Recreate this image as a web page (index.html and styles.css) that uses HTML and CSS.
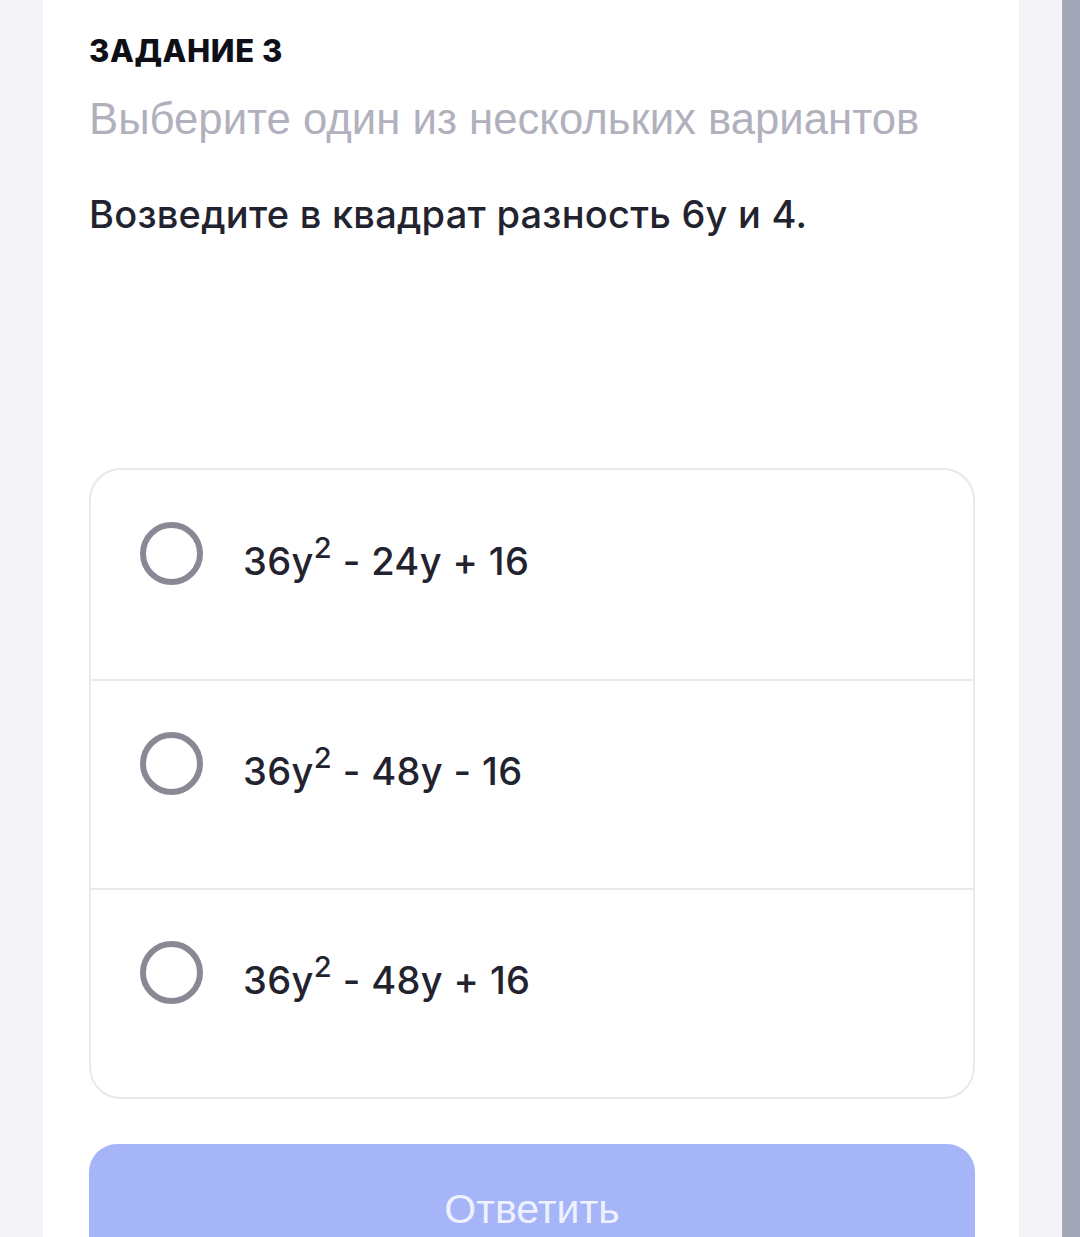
FILE: index.html
```html
<!DOCTYPE html>
<html lang="ru">
<head>
  <meta charset="UTF-8" />
  <meta name="viewport" content="width=device-width, initial-scale=1.0"/>
  <title>Задание 3</title>
  <link rel="stylesheet" href="styles.css">
</head>
<body>
  <div class="card">
    <h2 class="task-title">ЗАДАНИЕ 3</h2>
    <div class="task-hint">Выберите один из нескольких вариантов</div>
    <div class="task-question">Возведите в квадрат разность 6у и 4.</div>

    <div class="options">
      <label class="option">
        <span class="radio"></span>
        <span class="option-text">36y<sup>2</sup> - 24y + 16</span>
      </label>
      <label class="option">
        <span class="radio"></span>
        <span class="option-text">36y<sup>2</sup> - 48y - 16</span>
      </label>
      <label class="option">
        <span class="radio"></span>
        <span class="option-text">36y<sup>2</sup> - 48y + 16</span>
      </label>
    </div>

    <button class="answer-btn">Ответить</button>
  </div>
  <div class="scrollbar"></div>
</body>
</html>
```

FILE: styles.css
```css
body {
  margin: 0;
  height: 100vh;
  overflow: hidden;
  background: #f3f3f8;
  display: flex;
  font-family: Inter, 'Noto Sans', sans-serif;
  color: #23232f;
}

.card {
  margin-left: 43px;
  width: 976px;
  box-sizing: border-box;
  padding: 30px 44px 0 46px;
  background: #fff;
}

.task-title {
  margin: 0;
  font-size: 31px;
  font-weight: 800;
  line-height: 42px;
  letter-spacing: 0.6px;
  color: #0f0f17;
}

.task-hint {
  margin-top: 22px;
  font-family: 'Liberation Sans', Arial, sans-serif;
  font-size: 43.7px;
  line-height: 50px;
  color: #b1b1bd;
}

.task-question {
  margin-top: 47px;
  font-size: 38px;
  line-height: 46px;
  font-weight: 500;
  letter-spacing: 0.25px;
}

.options {
  margin-top: 231px;
  border: 2px solid #e8e8ed;
  border-radius: 32px;
  display: flex;
  flex-direction: column;
}

.option {
  height: 209px;
  display: flex;
  align-items: center;
  gap: 40px;
  padding: 0 0 42px 49px;
  box-sizing: border-box;
}

.option + .option {
  border-top: 2px solid #e8e8ed;
}

.radio {
  width: 51px;
  height: 51px;
  border: 6px solid #898996;
  border-radius: 50%;
}

.option-text {
  padding-top: 14px;
  font-size: 38px;
  font-weight: 500;
  letter-spacing: 0.4px;
}

.option-text sup {
  font-size: 29px;
  line-height: 0;
  vertical-align: 0.6em;
}

.answer-btn {
  margin-top: 45px;
  width: 100%;
  height: 130px;
  border: none;
  border-radius: 28px;
  background: #a5b5f7;
  color: #eef1ff;
  font-family: 'Liberation Sans', Arial, sans-serif;
  font-size: 41px;
  padding-bottom: 0;
  line-height: 1;
}

.scrollbar {
  margin-left: auto;
  width: 18px;
  background: #a3a7b8;
}
```
